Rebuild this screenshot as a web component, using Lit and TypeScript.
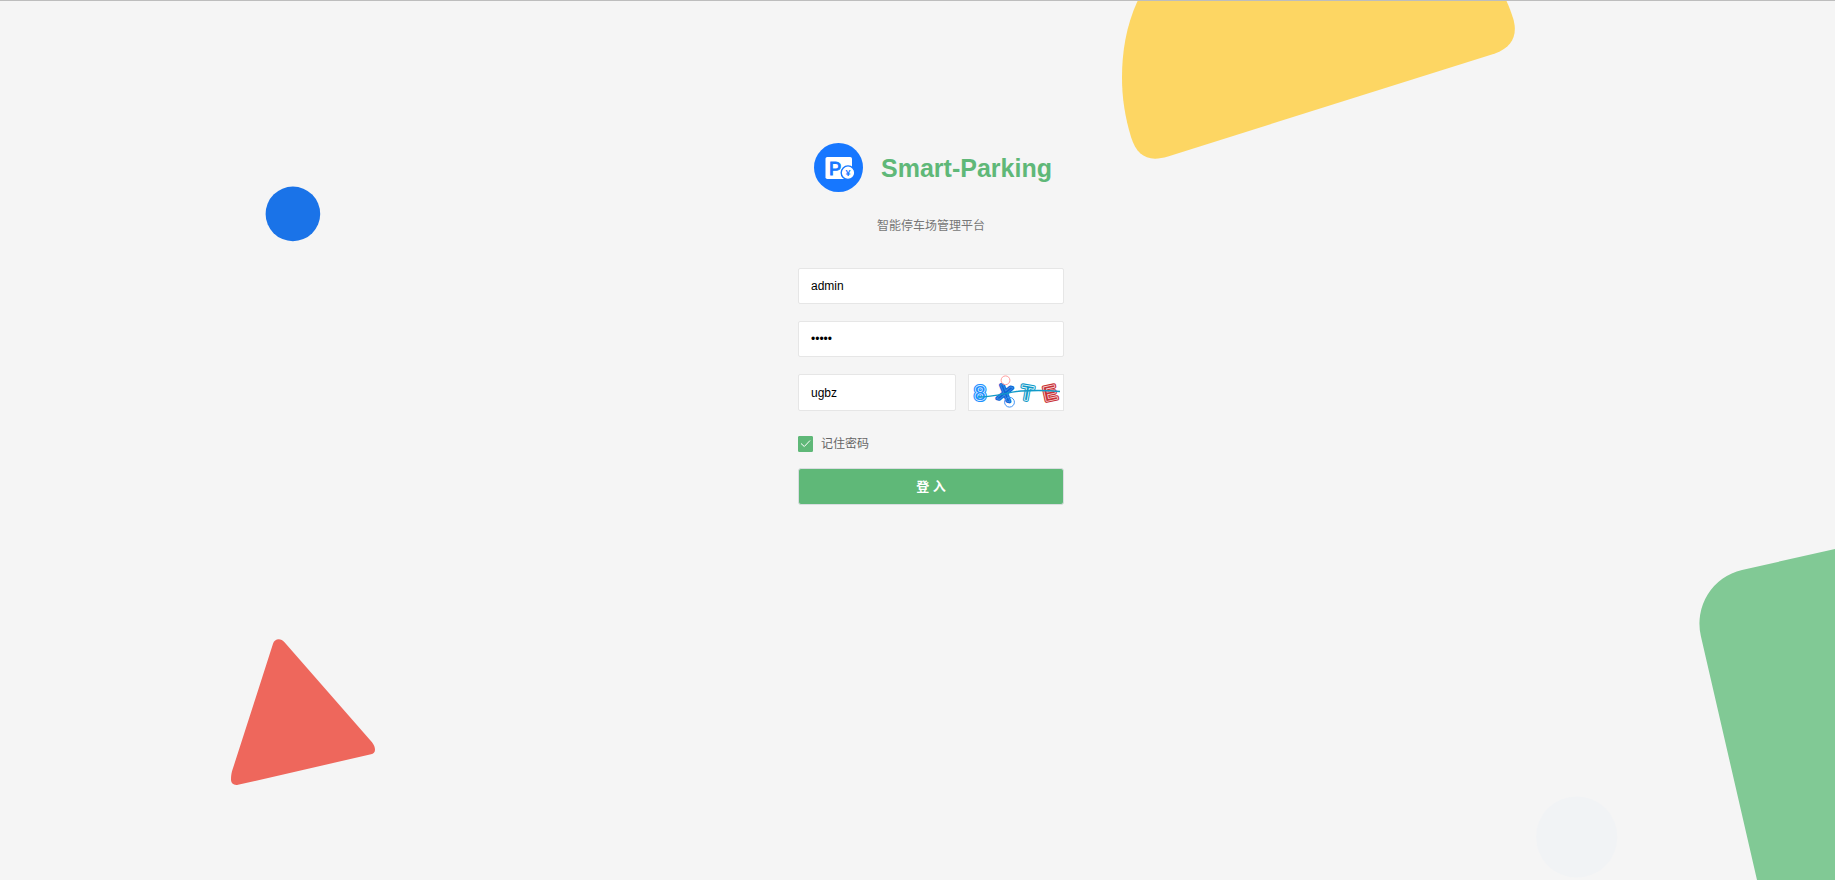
import { LitElement, html, css, svg } from "lit";
import { customElement, state } from "lit/decorators.js";

@customElement("login-backdrop")
class LoginBackdrop extends LitElement {
  static styles = css`
    :host {
      display: block;
    }
    .scene {
      display: block;
      width: 100%;
      height: 100%;
    }
  `;

  render() {
    return html`
      <svg class="scene" viewBox="0 1 1835 879" preserveAspectRatio="xMidYMid slice" aria-hidden="true">
        <path
          fill="#fdd663"
          d="M1138 0C1126 26 1122 52 1122 78C1122 98 1125 117 1131 137C1137 156 1148 162.5 1168 156.5L1495 53.5C1513 47 1518 34 1513 18C1511 12 1509 6 1506 0Z"
        />
        <circle fill="#1a73e8" cx="292.9" cy="213.9" r="27.3" />
        <path
          fill="#ee675c"
          d="M273 643.8C274.5 638.3 281 637.8 284.5 642.3L372 742.3C374 744.8 375 747.3 375 749.8C375 752.3 373.5 753.8 371 754.3L238 784.8C234 785.8 231 783.3 231 779.8C231 776.3 231.3 773.8 232 771.3Z"
        />
        <path fill="#81c995" d="M1835 548.9L1742 570A55 55 0 0 0 1700.9 636.2L1757 880H1835Z" />
        <circle fill="#f1f3f5" cx="1576.7" cy="837" r="40.6" />
      </svg>
    `;
  }
}

@customElement("parking-logo")
class ParkingLogo extends LitElement {
  static styles = css`
    :host {
      display: block;
      width: 49px;
      height: 49px;
    }
    .mark {
      display: block;
      width: 100%;
      height: 100%;
    }
    .letter {
      font: 400 19px Roboto, "Liberation Sans", sans-serif;
      fill: #1677ff;
      stroke: #1677ff;
      stroke-width: 0.9;
    }
    .yen {
      font: bold 9px "Liberation Sans", sans-serif;
      fill: #1677ff;
      text-anchor: middle;
    }
  `;

  render() {
    return html`
      <svg class="mark" viewBox="0 0 49 49" aria-hidden="true">
        <circle cx="24.5" cy="24.5" r="24.5" fill="#1677ff" />
        <rect x="11.5" y="14" width="26.5" height="22" rx="1.8" fill="#fff" />
        <text class="letter" x="15" y="31.6">P</text>
        <circle cx="34" cy="29.7" r="6.8" fill="#fff" stroke="#1677ff" stroke-width="1.4" />
        <text class="yen" x="34" y="33">¥</text>
      </svg>
    `;
  }
}

interface Glyph {
  char: string;
  x: number;
  turn: number;
  ink: string;
  band: string;
}

@customElement("captcha-picture")
class CaptchaPicture extends LitElement {
  static styles = css`
    :host {
      display: block;
      box-sizing: border-box;
      border: 1px solid #e6e6e6;
      background: #fff;
    }
    .picture {
      display: block;
      width: 100%;
      height: 100%;
    }
    .glyph {
      font: 20px "Liberation Sans", sans-serif;
      text-anchor: middle;
      stroke-linejoin: round;
      paint-order: stroke;
    }
    .outer {
      stroke-width: 4;
    }
    .inner {
      stroke-width: 1.8;
    }
  `;

  private glyphs: Glyph[] = [
    { char: "8", x: 11, turn: 0, ink: "#1e90ff", band: "#d4eaff" },
    { char: "X", x: 36, turn: 14, ink: "#0a66d6", band: "#3f8be4" },
    { char: "T", x: 58, turn: 10, ink: "#129ac8", band: "#e2f5fa" },
    { char: "E", x: 81, turn: -12, ink: "#c83237", band: "#f6cfcf" },
  ];

  render() {
    return html`
      <svg class="picture" viewBox="0 0 94 35" role="img" aria-label="验证码">
        ${this.glyphs.map(
          (g) => svg`
            <g transform="translate(${g.x} 18) rotate(${g.turn})">
              <text class="glyph outer" y="7" fill=${g.ink} stroke=${g.ink}>${g.char}</text>
              <text class="glyph inner" y="7" fill=${g.ink} stroke=${g.band} aria-hidden="true">${g.char}</text>
            </g>`
        )}
        <circle cx="36.5" cy="5.3" r="4.4" fill="none" stroke="#ff9c9c" />
        <circle cx="40.5" cy="27.2" r="4.9" fill="none" stroke="#3d93f5" />
        <path d="M9 22C27 22 39 17 52 16C68 15 76 15 91 16.5" fill="none" stroke="#129ac8" stroke-width="1.4" />
      </svg>
    `;
  }
}

@customElement("app-root")
class AppRoot extends LitElement {
  static styles = css`
    :host {
      display: grid;
      min-height: 100vh;
      box-sizing: border-box;
      overflow: hidden;
      border-top: 1px solid #bdbdbd;
      background: #f5f5f5;
      font: 12px "Liberation Sans", "Noto Sans CJK SC", sans-serif;
    }
    .backdrop,
    .page {
      grid-area: 1 / 1;
      min-width: 0;
      min-height: 0;
    }
    .backdrop {
      height: calc(100vh - 1px);
    }
    .page {
      z-index: 1;
      display: flex;
      flex-direction: column;
      align-items: center;
      padding: 142px 0 40px 27px;
    }
    .login {
      display: flex;
      flex-direction: column;
      width: 266px;
    }
    .brand {
      display: flex;
      align-items: center;
      justify-content: center;
      gap: 18px;
      padding-left: 4px;
    }
    .name {
      margin: 0;
      font-size: 25px;
      line-height: 32px;
      font-weight: bold;
      color: #5fb878;
      white-space: nowrap;
    }
    .slogan {
      margin: 24px 0 32px;
      line-height: 20px;
      text-align: center;
      color: #777;
    }
    .fields {
      display: flex;
      flex-direction: column;
      gap: 17px;
    }
    .row {
      display: flex;
      gap: 12px;
    }
    .field {
      box-sizing: border-box;
      width: 100%;
      min-width: 0;
      height: 36px;
      padding: 0 12px;
      border: 1px solid #e6e6e6;
      border-radius: 2px;
      background: #fff;
      color: #000;
      font: inherit;
      outline: none;
    }
    .field:focus {
      border-color: #d2d2d2;
    }
    .row .field,
    .captcha {
      height: 37px;
    }
    .captcha {
      flex: 0 0 96px;
    }
    .remember {
      display: flex;
      align-items: center;
      align-self: flex-start;
      gap: 8px;
      margin: 24px 0 15px;
      line-height: 18px;
      color: #666;
      cursor: pointer;
    }
    .tick {
      display: grid;
      width: 15px;
      height: 16px;
    }
    .box,
    .check {
      grid-area: 1 / 1;
      width: 100%;
      height: 100%;
      box-sizing: border-box;
    }
    .box {
      appearance: none;
      margin: 0;
      border: 1px solid #d2d2d2;
      border-radius: 1px;
      background: #fff;
    }
    .box:checked {
      border-color: #5fb878;
      background: #5fb878;
    }
    .check {
      pointer-events: none;
    }
    .submit {
      height: 37px;
      border: 1px solid #d9dde0;
      border-radius: 3px;
      padding: 0 0 2px;
      background: #5fb878;
      color: #fff;
      font: bold 13px "Liberation Sans", "Noto Sans CJK SC", sans-serif;
      cursor: pointer;
    }
    .submit:hover {
      opacity: 0.9;
    }
  `;

  @state() private remember = true;

  private toggle(e: Event) {
    this.remember = (e.target as HTMLInputElement).checked;
  }

  render() {
    return html`
      <login-backdrop class="backdrop"></login-backdrop>
      <main class="page">
        <form class="login" @submit=${(e: Event) => e.preventDefault()}>
          <header class="brand">
            <parking-logo></parking-logo>
            <h1 class="name">Smart-Parking</h1>
          </header>
          <p class="slogan">智能停车场管理平台</p>
          <div class="fields">
            <input class="field" type="text" aria-label="用户名" .value=${"admin"} />
            <input class="field" type="password" aria-label="密码" .value=${"admin"} />
            <div class="row">
              <input class="field" type="text" aria-label="验证码" .value=${"ugbz"} />
              <captcha-picture class="captcha"></captcha-picture>
            </div>
          </div>
          <label class="remember">
            <span class="tick">
              <input class="box" type="checkbox" .checked=${this.remember} @change=${this.toggle} />
              <svg class="check" viewBox="0 0 15 16" aria-hidden="true">
                <path d="M3 7.5L6.3 10.5L12 4.5" fill="none" stroke="#fff" stroke-width="1" />
              </svg>
            </span>
            <span>记住密码</span>
          </label>
          <button class="submit" type="submit">登 入</button>
        </form>
      </main>
    `;
  }
}
